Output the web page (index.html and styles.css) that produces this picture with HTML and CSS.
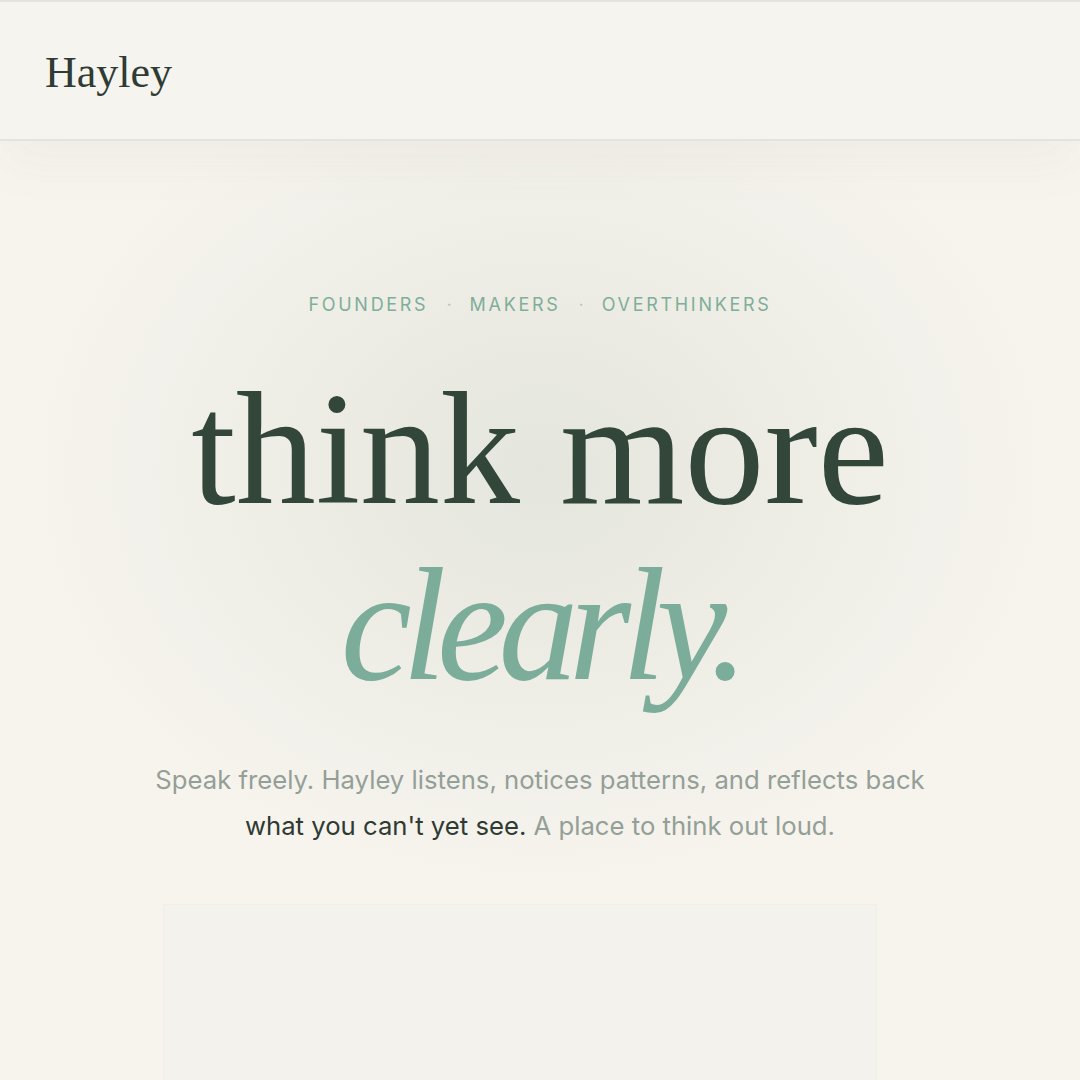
FILE: index.html
```html
<!DOCTYPE html>
<html lang="en">
<head>
<meta charset="utf-8">
<title>Hayley</title>
<link rel="stylesheet" href="styles.css">
</head>
<body>
<header class="site-header">
  <div class="logo">Hayley</div>
</header>
<main class="hero">
  <p class="eyebrow"><span>FOUNDERS</span><span class="dot">·</span><span>MAKERS</span><span class="dot">·</span><span>OVERTHINKERS</span></p>
  <h1 class="headline"><span class="line-1">think more</span><span class="line-2">clearly.</span></h1>
  <p class="lede">Speak freely. Hayley listens, notices patterns, and reflects back<br><strong>what you can't yet see.</strong> A place to think out loud.</p>
  <div class="panel"></div>
</main>
</body>
</html>
```

FILE: styles.css
```css
* { box-sizing: border-box; }
html, body { margin: 0; padding: 0; }
body {
  background: #f7f4ee;
  color: #2f3d34;
  font-family: "Inter", "Liberation Sans", sans-serif;
  height: 1080px;
  overflow: hidden;
}
.site-header {
  height: 141px;
  border-top: 2px solid #e4e3df;
  border-bottom: 2px solid #e4e3de;
  background: #f5f4ef;
  display: flex;
  align-items: center;
  padding-left: 45px;
  position: relative;
  z-index: 2;
  box-shadow: 0 24px 50px rgba(120, 120, 100, 0.05);
}
.logo {
  font-family: "Liberation Serif", serif;
  font-size: 44px;
  color: #2f3b33;
  line-height: 1;
  padding-top: 4px;
}
.hero {
  display: flex;
  flex-direction: column;
  align-items: center;
  padding-top: 152px;
  background:
    radial-gradient(ellipse 520px 420px at 540px 330px, rgba(226, 228, 220, 0.9), rgba(226, 228, 220, 0) 100%),
    #f7f4ee;
  min-height: 939px;
}
.eyebrow {
  margin: 0;
  font-size: 18px;
  line-height: 24px;
  letter-spacing: 0.15em;
  color: #7fae99;
  display: flex;
  gap: 18px;
}
.eyebrow .dot { color: #b5cbbf; letter-spacing: 0; }
.headline {
  margin: 44px 0 0;
  font-family: "Liberation Serif", serif;
  font-weight: 400;
  font-size: 160px;
  line-height: 176px;
  text-align: center;
  display: flex;
  flex-direction: column;
  align-items: center;
}
.line-1 { color: #33463a; letter-spacing: 0; }
.line-2 {
  font-style: italic;
  color: #7bad9a;
  letter-spacing: -0.06em;
}
.lede {
  margin: 44px 0 0;
  font-size: 25.7px;
  line-height: 46px;
  text-align: center;
  color: #939f97;
}
.lede strong { font-weight: 400; color: #2f3a33; }
.panel {
  margin-top: 55px;
  margin-right: 40px;
  width: 714px;
  height: 300px;
  background: #f3f2ed;
  border: 1px solid #efeee9;
}
```
